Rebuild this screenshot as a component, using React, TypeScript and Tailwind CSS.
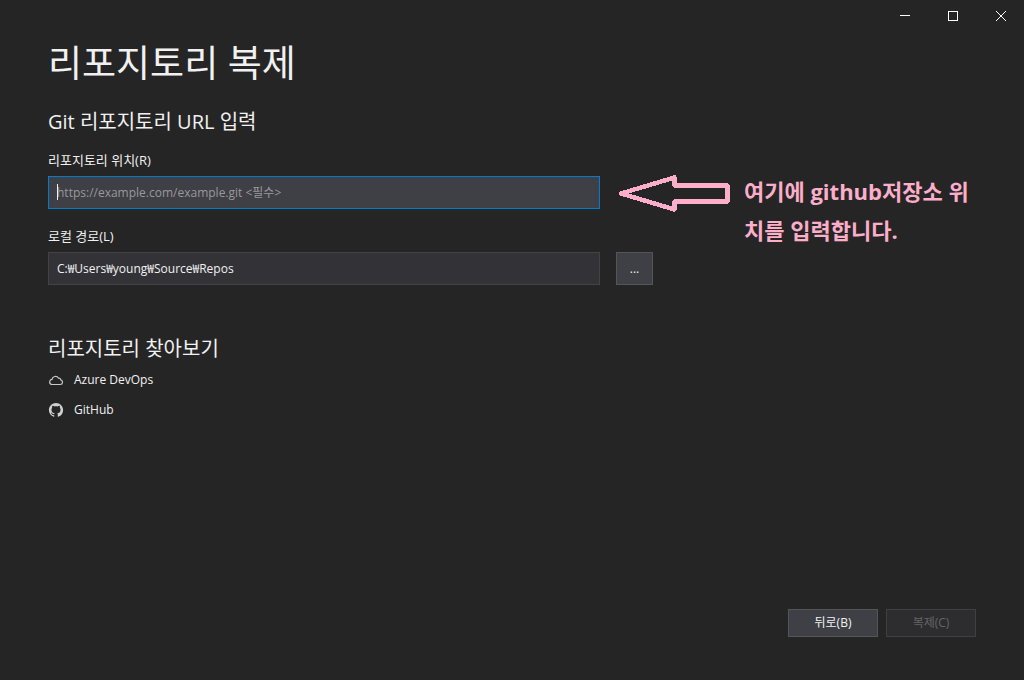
import { useState } from "react"

const providers = [
  { name: "Azure DevOps", Icon: CloudIcon },
  { name: "GitHub", Icon: GitHubIcon },
]

function CloudIcon() {
  return (
    <svg width="16" height="16" viewBox="0 0 16 16" fill="none" stroke="#c8c8c8" strokeWidth="1.2" aria-hidden="true">
      <path d="M3.600 12.500h8.700a2.400 2.400 0 0 0 .5-4.700 2.100 2.100 0 0 0-2.300-1.600A3.500 3.500 0 0 0 4 7.400a2.600 2.600 0 0 0-.4 5.100z" />
    </svg>
  )
}

function GitHubIcon() {
  return (
    <svg width="16" height="16" viewBox="-1 -1 18 18" fill="#d0d0d0" aria-hidden="true">
      <path d="M8 0C3.58 0 0 3.58 0 8c0 3.54 2.29 6.53 5.47 7.59.4.07.55-.17.55-.38 0-.19-.01-.82-.01-1.49-2.01.37-2.53-.49-2.69-.94-.09-.23-.48-.94-.82-1.13-.28-.15-.68-.52-.01-.53.63-.01 1.08.58 1.23.82.72 1.21 1.87.87 2.33.66.07-.52.28-.87.51-1.07-1.78-.2-3.64-.89-3.64-3.95 0-.87.31-1.59.82-2.15-.08-.2-.36-1.02.08-2.12 0 0 .67-.21 2.2.82.64-.18 1.32-.27 2-.27s1.36.09 2 .27c1.53-1.04 2.2-.82 2.2-.82.44 1.1.16 1.92.08 2.12.51.56.82 1.27.82 2.15 0 3.07-1.87 3.75-3.65 3.95.29.25.54.73.54 1.48 0 1.07-.01 1.93-.01 2.2 0 .21.15.46.55.38A8.01 8.01 0 0 0 16 8c0-4.42-3.58-8-8-8z" />
    </svg>
  )
}

function TitleBar() {
  return (
    <header className="flex h-8 justify-end">
      <button type="button" aria-label="최소화" className="flex w-12 items-center justify-center pl-0.5 hover:bg-[#3f3f46]">
        <svg width="10" height="10" shapeRendering="crispEdges" aria-hidden="true">
          <path d="M0 4.5h10" stroke="#fff" />
        </svg>
      </button>
      <button type="button" aria-label="최대화" className="flex w-12 items-center justify-center pl-0.5 hover:bg-[#3f3f46]">
        <svg width="10" height="10" shapeRendering="crispEdges" aria-hidden="true">
          <path d="M.5.5h9v9h-9z" stroke="#fff" fill="none" />
        </svg>
      </button>
      <button type="button" aria-label="닫기" className="flex w-12 items-center justify-center pl-0.5 hover:bg-[#e81123]">
        <svg width="10" height="10" aria-hidden="true">
          <path d="M0 0l10 10M10 0L0 10" stroke="#fff" />
        </svg>
      </button>
    </header>
  )
}

export default function App() {
  const [url, setUrl] = useState("")
  const [path, setPath] = useState("C:₩Users₩young₩Source₩Repos")

  return (
    <div className="flex min-h-screen flex-col bg-[#252526] font-['Open_Sans','Noto_Sans_CJK_KR',sans-serif] text-[12px] leading-4 text-[#f1f1f1]">
      <TitleBar />

      <main className="flex-1 px-12 pt-1">
        <h1 className="text-[37px] leading-[54px]">리포지토리 복제</h1>

        <h2 className="mt-4 text-[20px] leading-8">Git 리포지토리 URL 입력</h2>

        {/* Location and local path */}
        <div className="mt-[14px] grid grid-cols-[minmax(0,552px)_37px_minmax(0,1fr)] gap-x-4">
          <label htmlFor="repo-url" className="col-start-1 row-start-1 mb-2 text-[13px]">
            리포지토리 위치(R)
          </label>
          <div className="relative col-start-1 row-start-2">
            <input
              id="repo-url"
              type="text"
              autoFocus
              placeholder="https://example.com/example.git <필수>"
              value={url}
              onChange={(e) => setUrl(e.target.value)}
              className="h-[33px] w-full border border-[#007acc] bg-[#3f3f46] px-2 outline-none placeholder:text-[#999999]"
            />
            {/* Steady caret while the box is empty */}
            {url === "" && <span className="pointer-events-none absolute top-2 left-[9px] h-4 w-px bg-[#f1f1f1]" />}
          </div>

          {/* Pink note beside the URL box */}
          <div className="col-span-2 col-start-2 row-span-3 row-start-1 flex items-start gap-3 pt-5 text-[#ffaec9]">
            <svg
              width="116"
              height="40"
              viewBox="0 0 116 40"
              className="shrink-0"
              fill="none"
              stroke="currentColor"
              strokeWidth="4.5"
              strokeLinejoin="round"
              shapeRendering="crispEdges"
              aria-hidden="true"
            >
              <path d="M5 21.5L58.500 5.500V13.500H111.500V29.500H58.500V37.500z" />
            </svg>
            <p className="text-[22px] leading-[39px] font-bold">여기에 github저장소 위치를 입력합니다.</p>
          </div>

          <label htmlFor="local-path" className="col-start-1 row-start-3 mt-[19px] mb-2 text-[13px]">
            로컬 경로(L)
          </label>
          <input
            id="local-path"
            type="text"
            value={path}
            onChange={(e) => setPath(e.target.value)}
            className="col-start-1 row-start-4 h-[33px] border border-[#434346] bg-[#333337] px-2 pb-0.5 outline-none"
          />
          <button
            type="button"
            aria-label="찾아보기"
            className="col-start-2 row-start-4 h-[33px] border border-[#555555] bg-[#3f3f46]"
          >
            ...
          </button>
        </div>

        {/* Providers */}
        <h2 className="mt-12 text-[20px] leading-8">리포지토리 찾아보기</h2>
        <ul className="mt-[7px] flex flex-col gap-[14px]">
          {providers.map(({ name, Icon }) => (
            <li key={name} className="flex">
              <a href="#" className="flex items-center gap-[10px]">
                <Icon />
                {name}
              </a>
            </li>
          ))}
        </ul>
      </main>

      <footer className="flex justify-end gap-2 px-12 pb-[43px]">
        <button type="button" className="h-7 w-[90px] border border-[#555555] bg-[#3f3f46]">
          뒤로(B)
        </button>
        <button
          type="button"
          disabled
          className="h-7 w-[90px] border border-[#3f3f46] bg-[#2d2d30] text-[#656565]"
        >
          복제(C)
        </button>
      </footer>
    </div>
  )
}
